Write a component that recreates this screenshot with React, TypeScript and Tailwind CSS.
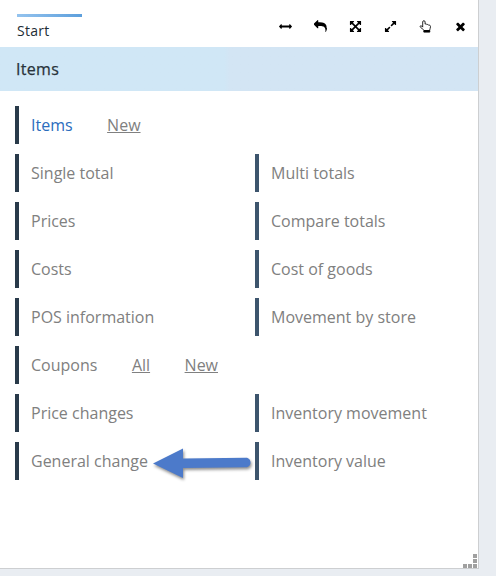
import React from "react";

const icons: { name: string; path: string }[] = [
  { name: "width", path: "M1792 896q0 26-19 45l-256 256q-19 19-45 19t-45-19-19-45v-128h-1024v128q0 26-19 45t-45 19-45-19l-256-256q-19-19-19-45t19-45l256-256q19-19 45-19t45 19 19 45v128h1024v-128q0-26 19-45t45-19 45 19l256 256q19 19 19 45z" },
  { name: "back", path: "M1792 1120q0 166-127 451-3 7-10.5 24t-13.5 30-13 22q-12 17-28 17-15 0-23.5-10t-8.5-25q0-9 2.5-26.5t2.5-23.5q5-68 5-123 0-112-19.5-200.5t-54-153.5-89-112-119-78.5-144-49-164-24.5-179.5-7h-224v256q0 26-19 45t-45 19-45-19l-512-512q-19-19-19-45t19-45l512-512q19-19 45-19t45 19 19 45v256h224q713 0 875 403 53 134 53 333z" },
  { name: "arrows", path: "M1411 541l-355 355 355 355 144-144q29-31 70-14 39 17 39 59v448q0 26-19 45t-45 19h-448q-42 0-59-40-17-39 14-69l144-144-355-355-355 355 144 144q31 30 14 69-17 40-59 40h-448q-26 0-45-19t-19-45v-448q0-42 40-59 39-17 69 14l144 144 355-355-355-355-144 144q-19 19-45 19-12 0-24-5-40-17-40-59v-448q0-26 19-45t45-19h448q42 0 59 40 17 39-14 69l-144 144 355 355 355-355-144-144q-31-30-14-69 17-40 59-40h448q26 0 45 19t19 45v448q0 42-39 59-13 5-25 5-26 0-45-19z" },
  { name: "expand", path: "M883 1056q0 13-10 23l-332 332 144 144q19 19 19 45t-19 45-45 19h-448q-26 0-45-19t-19-45v-448q0-26 19-45t45-19 45 19l144 144 332-332q10-10 23-10t23 10l114 114q10 10 10 23zm781-864v448q0 26-19 45t-45 19-45-19l-144-144-332 332q-10 10-23 10t-23-10l-114-114q-10-10-10-23t10-23l332-332-144-144q-19-19-19-45t19-45 45-19h448q26 0 45 19t19 45z" },
  { name: "hand", path: "" },
  { name: "close", path: "M1490 1322q0 40-28 68l-136 136q-28 28-68 28t-68-28l-294-294-294 294q-28 28-68 28t-68-28l-136-136q-28-28-28-68t28-68l294-294-294-294q-28-28-28-68t28-68l136-136q28-28 68-28t68 28l294 294 294-294q28-28 68-28t68 28l136 136q28 28 28 68t-28 68l-294 294 294 294q28 28 28 68z" },
];

function ToolIcon({ name, path }: { name: string; path: string }) {
  if (name === "hand") {
    return (
      <svg className="h-[13px] w-[13px]" viewBox="0 0 13 13" fill="none" stroke="black" strokeWidth="0.85" strokeLinejoin="round">
        <path d="M3.7 7.1V2c0-1.8 2.4-1.8 2.4 0v2.1c.8-.4 1.5-.1 1.8.5.8-.4 1.5 0 1.8.6 1-.3 1.8.3 1.8 1.3 0 1.6-.7 2.4-.9 4H5.1C4.7 9.4 3 8.8 1.8 7.6.5 6.3 1.5 5.1 2.8 6.1z" />
        <path d="M4.8 10.6h6v1.5h-6z" fill="black" />
      </svg>
    );
  }
  return (
    <svg className="h-[13px] w-[13px]" viewBox="0 0 1792 1792" fill="black">
      <path d={path} />
    </svg>
  );
}

type Entry = { label: string; active?: boolean; links?: string[] };
const rows: { left: Entry; right?: string }[] = [
  { left: { label: "Items", active: true, links: ["New"] } },
  { left: { label: "Single total" }, right: "Multi totals" },
  { left: { label: "Prices" }, right: "Compare totals" },
  { left: { label: "Costs" }, right: "Cost of goods" },
  { left: { label: "POS information" }, right: "Movement by store" },
  { left: { label: "Coupons", links: ["All", "New"] } },
  { left: { label: "Price changes" }, right: "Inventory movement" },
  { left: { label: "General change" }, right: "Inventory value" },
];

export default function App() {
  return (
    <div className="h-[576px] w-[496px] overflow-hidden bg-[#e9edf2] font-['Open_Sans','Noto_Sans',sans-serif]">
      <main className="relative h-[569px] w-[479px] border-r border-b border-[#cdcfd1] bg-white">
        <header className="flex h-[47px] justify-between">
          <div className="ml-[17px] pt-[14px]">
            <div className="h-[3px] w-[65px] bg-linear-to-r from-[#94c3ee] to-[#5c9fdc]" />
            <div className="mt-[3px] text-[14px] leading-[21px] tracking-[0.3px] text-[#222d35]">Start</div>
          </div>
          <div className="mr-[11px] flex gap-[22px] pt-[20px]">
            {icons.map((i) => <ToolIcon key={i.name} {...i} />)}
          </div>
        </header>
        <h1 className="flex h-[44px] items-center bg-linear-to-r from-[#d0e7f6] from-47% to-[#d3e5f4] to-48% pl-4 text-[16px] font-medium tracking-[0.3px] text-[#28333b] [-webkit-text-stroke:0.25px_#28333b]">Items</h1>
        <div className="flex flex-col gap-[10px] pt-[15px] pl-[15px] font-normal text-[16px] text-[#808080]">
          {rows.map(({ left, right }) => (
            <div key={left.label} className="flex h-[38px]">
              <div className="flex w-[240px] items-center gap-[34.5px] border-l-4 border-[#293a4a] pl-3 whitespace-nowrap">
                <span className={left.active ? "text-[#2b6cbd]" : ""}>{left.label}</span>
                {left.links?.map((l) => <a key={l} className="underline">{l}</a>)}
              </div>
              {right && <div className="flex items-center border-l-4 border-[#3d556d] pl-3 whitespace-nowrap">{right}</div>}
            </div>
          ))}
        </div>
        <svg className="absolute top-[442px] left-[146px] h-[42px] w-[112px] drop-shadow-[1px_2px_1.5px_rgba(0,0,0,0.45)]" viewBox="0 0 112 42">
          <path d="M7 21.5 37 6.5v10l63-.7c6 0 6 9.5 0 9.5l-63 .7v10z" fill="#4c7aca" />
        </svg>
        <svg className="absolute right-[1px] bottom-0 h-[14px] w-[14px]" viewBox="0 0 14 14" fill="#a0a0a0">
          <path d="M10 0h4v4h-4zM10 5h4v4h-4zM10 10h4v4h-4zM5 10h4v4H5zM0 10h4v4H0z" />
        </svg>
      </main>
    </div>
  );
}
